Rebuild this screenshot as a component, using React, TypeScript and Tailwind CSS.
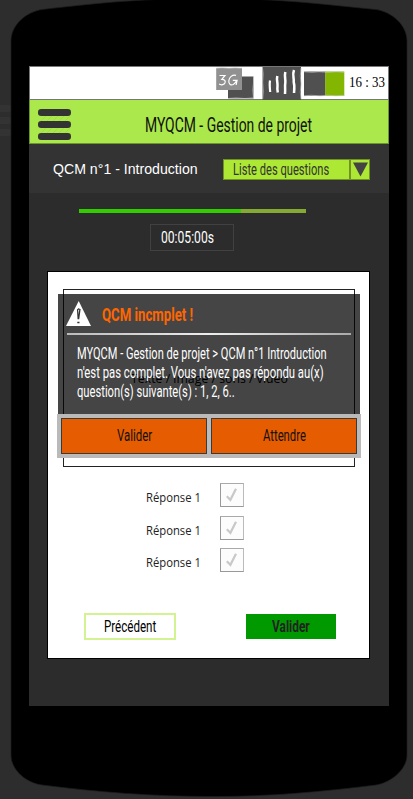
import { useLayoutEffect, useRef, useState } from "react";

type FitProps = { width: number; className?: string; children: string };

/* One line of lettering, condensed horizontally to the given width. */
function Fit({ width, className = "", children }: FitProps) {
  const ref = useRef<HTMLSpanElement>(null);
  const [scale, setScale] = useState(1);
  useLayoutEffect(() => {
    if (ref.current) setScale(width / ref.current.offsetWidth);
  }, [width, children]);
  return (
    <span className="flex shrink-0" style={{ width }}>
      <span
        ref={ref}
        className={`shrink-0 origin-left whitespace-nowrap ${className}`}
        style={{ transform: `scaleX(${scale})` }}
      >
        {children}
      </span>
    </span>
  );
}

function PhoneBody() {
  return (
    <svg className="absolute inset-0" width="413" height="799" viewBox="0 0 413 799">
      <g fill="#333333">
        <rect x="-20" y="105" width="32" height="7" rx="3.5" />
        <rect x="-20" y="117" width="32" height="7" rx="3.5" />
        <rect x="-20" y="129" width="32" height="7" rx="3.5" />
      </g>
      <path
        d="M11 41C11 25 26 12 42 9.500C90 4 130 -1 209 -2C288 -1 328 5 376 9.500C392 12 407 25 407 41V755C407 770 390 783 376 785C320 792 270 796.500 215 796.500C150 796.500 98 792 42 785C26 783 11 770 11 755Z"
        fill="#000"
        stroke="#1c1c1c"
        strokeWidth="0.700"
      />
    </svg>
  );
}

function Menu() {
  return (
    <svg width="34" height="32" viewBox="0 0 34 32">
      <g stroke="#98d43f" strokeWidth="0.500">
        <path d="M3 12l5-5M9 12l5-5M15 12l5-5M21 12l5-5M27 12l5-5M3 24l5-5M9 24l5-5M15 24l5-5M21 24l5-5M27 24l5-5" />
      </g>
      <g fill="#333">
        <rect y="0" width="33" height="7" rx="3.200" />
        <rect y="12" width="33" height="7" rx="3.200" />
        <rect y="24" width="33" height="7" rx="3.200" />
      </g>
    </svg>
  );
}

function StatusIcons() {
  return (
    <svg width="130" height="33" viewBox="215 67 130 33">
      <rect x="228" y="76.500" width="25.500" height="22" fill="#505050" />
      <rect x="216.200" y="68" width="25.800" height="22" fill="#919191" />
      <path d="M216 68.300l6-.6 7 .6 6-.5 7 .5M253.500 77v6l-.6 7 .6 8M228 98.500l8-.5 9 .5 8-.5" stroke="#ccc" strokeWidth="0.700" fill="none" />
      <path
        d="M219.500 75.500h5.500l-3.200 3.900c3 .1 3.800 1.700 3.200 3.300-.8 1.900-3.700 2.800-5.900 1.400M236 75.300c-3.500-1-7 2-7.200 5.600-.2 3.500 2.200 4.600 4.500 3.600 1.700-.8 2.700-2.200 3.100-4.100h-3.600l4.300-.1-1 4.700"
        fill="none"
        stroke="#fff"
        strokeWidth="1.200"
      />
      <rect x="262.500" y="67" width="38.500" height="33" fill="#505050" />
      <path d="M262.500 68l.7 6-.5 8 .6 9-.6 8M301 68l-.7 8 .7 8-.7 8 .7 7" stroke="#bbb" strokeWidth="0.700" fill="none" />
      <g fill="none" stroke="#fff" strokeWidth="2.500">
        <path d="M270 80.500c-.6 4-.3 7 .2 11.500" strokeWidth="2.200" />
        <path d="M277.300 76c-1 4 .6 7 .2 10s-.3 4 .3 6.500" />
        <path d="M285.300 72c-1.200 5 .6 8 0 11s.2 6-.3 11" />
        <path d="M294 70c-2 5 .3 8-.3 12 1.200 4 .6 8 .3 11" />
      </g>
      <rect x="304" y="71.500" width="21.500" height="24.500" fill="#505050" />
      <rect x="325.300" y="71.500" width="19" height="24.500" fill="#82b600" />
      <path d="M304 71.700l8 .5 7-.5 9 .5 8-.5 8 .4M304 95.800l7-.5 9 .5 8-.5 8 .5 8-.4" stroke="#ccc" strokeWidth="0.700" fill="none" />
    </svg>
  );
}

function Answer({ gap }: { gap: string }) {
  return (
    <div className={`flex items-start ${gap}`}>
      <div className="w-[74px] pt-[5px]">
        <Fit width={55} className="font-['Open_Sans',sans-serif] text-[12.500px] leading-[19px] text-[#222]">
          Réponse 1
        </Fit>
      </div>
      <div className="flex size-6 items-center justify-center border border-[#999] border-t-[#aaa] border-r-[#bbb] bg-[#fcfcfc]">
        <svg width="14" height="16" viewBox="0 0 14 16">
          <path d="M1.800 9.300l3.600 3.500 5.600-11" fill="none" stroke="#c8c8c8" strokeWidth="2.200" />
        </svg>
      </div>
    </div>
  );
}

function Dialog() {
  return (
    <div className="absolute top-[22px] left-[9px] w-[304px] font-[Roboto,sans-serif]">
      <div className="mx-px h-[120px] bg-black/73">
        <div className="flex h-[39px] items-start pl-[8px]">
          <svg className="mt-[7px]" width="25" height="26" viewBox="0 0 25 26">
            <path d="M12.700 0L25 25H0Z" fill="#fff" />
            <path d="M13.300 7.500l-1.700 1.200.6 9.500M14 7.800l-1.400 10.400M11.300 21.500h2.200" fill="none" stroke="#333" strokeWidth="1.300" />
          </svg>
          <div className="pt-[10px] pl-[11px]">
            <Fit width={91} className="text-[19px] leading-[22px] font-bold text-[#ff6600]">QCM incmplet !</Fit>
          </div>
        </div>
        <div className="ml-[9px] h-[2px] w-[284px] bg-linear-to-r from-[#bbb] via-[#eee] to-[#aaa]" />
        <div className="pt-[9px] pl-[19px] text-[16px] leading-[19px] text-white">
          <Fit width={250}>{"MYQCM - Gestion de projet > QCM n°1 Introduction"}</Fit>
          <Fit width={247}>n'est pas complet. Vous n'avez pas répondu au(x)</Fit>
          <Fit width={158}>question(s) suivante(s) : 1, 2, 6..</Fit>
        </div>
      </div>
      <div className="flex h-[44px] gap-[4px] bg-[#bababa] px-[4px] pt-[4px] text-[16px] leading-[18px] text-[#111]">
        <div className="flex h-[36px] w-[146px] items-center justify-center border border-[#3c3a35] bg-[#e65c00]">
          <Fit width={35}>Valider</Fit>
        </div>
        <div className="flex h-[36px] w-[146px] items-center justify-center border border-[#3c3a35] bg-[#e65c00]">
          <Fit width={43}>Attendre</Fit>
        </div>
      </div>
    </div>
  );
}

export default function App() {
  return (
    <div className="relative h-[799px] w-[413px] overflow-hidden bg-[#2d2d2d]">
      <PhoneBody />
      <div className="relative pt-[66px] pl-[29px]">
        <div className="h-[640px] w-[360px] bg-[#2c2c2c]">
          <div className="flex h-[34px] items-center justify-end border border-[#777] bg-white pr-[3px]">
            <StatusIcons />
            <div className="pl-[4px]">
              <Fit width={36} className="font-['Liberation_Serif',serif] text-[14px] leading-[16px] text-black">16 : 33</Fit>
            </div>
          </div>
          <div className="flex h-[44px] items-start border border-t-0 border-[#6d9430] bg-[#aae84b] pt-[9px] pl-[8px]">
            <Menu />
            <div className="pt-[4px] pl-[73px]">
              <Fit width={167} className="font-[Roboto,sans-serif] text-[20px] leading-[24px] text-[#111]">MYQCM - Gestion de projet</Fit>
            </div>
          </div>
          <div className="flex h-[49px] items-start rounded-t-[3px] bg-[#333] pt-[15px] pl-[24px]">
            <div className="w-[170px] pt-px">
              <Fit width={145} className="font-['Liberation_Sans',Arial,sans-serif] text-[15px] leading-[18px] text-white">QCM n°1 - Introduction</Fit>
            </div>
            <div className="flex h-[21px] w-[147px] border border-[#6f9423] bg-[#ace834]">
              <div className="w-[125px] pl-[9px]">
                <Fit width={96} className="font-[Roboto,sans-serif] text-[16px] leading-[20px] text-[#333]">Liste des questions</Fit>
              </div>
              <div className="flex flex-1 items-center justify-center border-l-2 border-[#6f9423]">
                <svg width="15" height="15" viewBox="0 0 16 15">
                  <path d="M0 0H16L8 15Z" fill="#444" />
                </svg>
              </div>
            </div>
          </div>
          <div className="flex pt-[16px] pl-[50px]">
            <div className="h-[4px] w-[162px] bg-[#33cc00]" />
            <div className="h-[4px] w-[65px] bg-[#85aa33]" />
          </div>
          <div className="mt-[11px] ml-[121px] flex h-[27px] w-[84px] items-center border border-[#414141] pl-[10px]">
            <Fit width={53} className="font-[Roboto,sans-serif] text-[16px] leading-[19px] text-white">00:05:00s</Fit>
          </div>
          <div className="relative mt-[20px] ml-[18px] h-[388px] w-[323px] border border-black bg-white pt-[17px]">
            <div className="ml-[15px] h-[178px] w-[292px] border border-[#222] pt-[80px] pl-[67px]">
              <Fit width={157} className="font-['Open_Sans',sans-serif] text-[12px] leading-[18px] text-black">Texte / image / sons / video</Fit>
            </div>
            <div className="pt-[16px] pl-[98px]">
              <Answer gap="mb-[9px]" />
              <Answer gap="mb-[8px]" />
              <Answer gap="mb-0" />
            </div>
            <div className="flex items-start gap-[70px] pt-[41px] pl-[36px] font-[Roboto,sans-serif] text-[16px] leading-[18px]">
              <div className="flex h-[27px] w-[92px] items-center justify-center border-2 border-[#d3f291] text-black">
                <Fit width={52}>Précédent</Fit>
              </div>
              <div className="mt-px flex h-[25px] w-[90px] items-center justify-center bg-[#009a00] text-[#222]">
                <Fit width={38} className="font-bold">Valider</Fit>
              </div>
            </div>
            <Dialog />
          </div>
        </div>
      </div>
    </div>
  );
}
